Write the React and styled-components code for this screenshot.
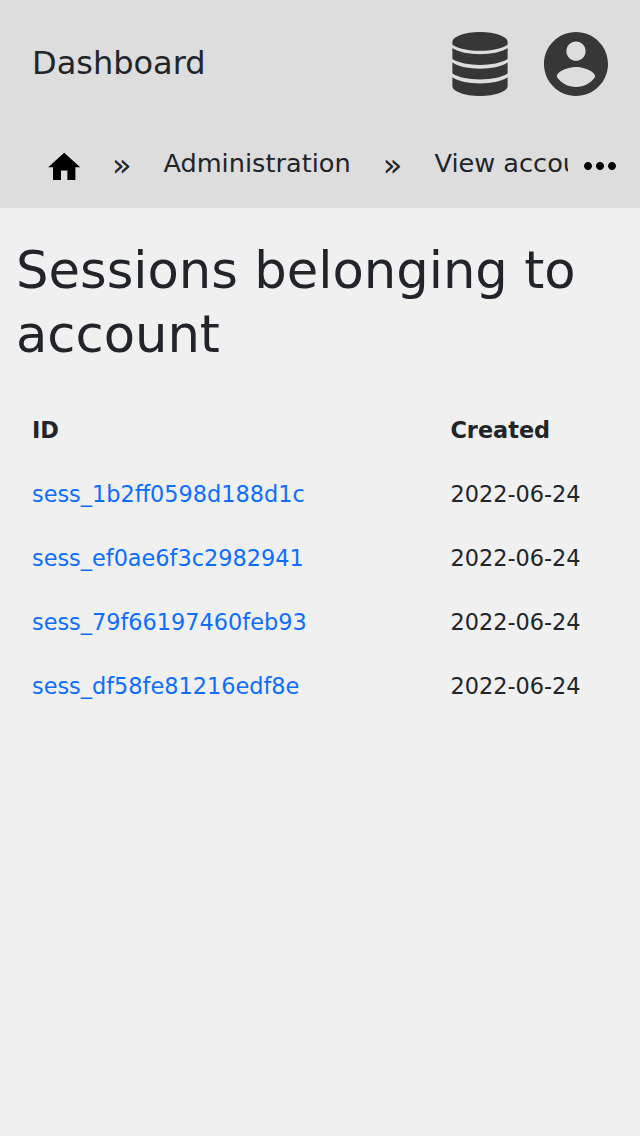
import React from "react";
import styled, { createGlobalStyle } from "styled-components";
import { MdHome, MdMoreHoriz } from "react-icons/md";

const Global = createGlobalStyle`
  * { box-sizing: border-box; }
  body { margin: 0; background: #f0f0f0; color: #212529; font-family: "DejaVu Sans", sans-serif; }
`;
const Page = styled.div`min-height: 100vh;`;
const TopBar = styled.header`
  display: flex; align-items: center; height: 128px; padding: 0 32px; background: #ddd;
`;
const Brand = styled.div`flex: 1; font-size: 32px; line-height: 48px; padding-bottom: 2px;`;
const Actions = styled.div`display: flex; gap: 32px; color: #373737;`;
const IconButton = styled.a`display: flex; width: 64px; height: 64px; svg { width: 64px; height: 64px; }`;
const Crumbs = styled.nav`display: flex; height: 80px; padding-bottom: 8px; background: #ddd;`;
const CrumbList = styled.div`
  display: flex; align-items: center; width: 568px; padding-left: 44.8px; overflow: hidden; white-space: nowrap;
`;
const Home = styled.a`display: flex; flex: none; padding-top: 6px; color: #000;`;
const Separator = styled.span`
  flex: none; width: ${(p) => p.$width}; padding: 2px 0 0; text-align: center; font-size: 32px; line-height: 40px;
`;
const Crumb = styled.span`flex: none; font-size: 25.6px; line-height: 40px; padding-bottom: 2px;`;
const FirstCrumb = styled(Crumb)`margin-left: 3px;`;
const More = styled.button`
  display: flex; align-items: center; justify-content: center; width: 64px; padding: 4px 0 0;
  border: 0; background: none; color: #000;
`;
const Main = styled.main`padding: 30px 16px;`;
const Title = styled.h1`margin: 0; font-size: 51.2px; line-height: 64px; font-weight: 400;`;
const Table = styled.table`
  width: 100%; margin-top: 32px; border-collapse: collapse; table-layout: fixed; font-size: 22.4px; line-height: 32px; text-align: left;
`;
const Cell = styled.td`padding: 16px; height: 64px;`;
const HeadCell = styled.th`padding: 16px; height: 64px; width: ${(p) => p.$width || "auto"};`;
const Link = styled.a`color: #0d6efd;`;

const sessions = ["sess_1b2ff0598d188d1c", "sess_ef0ae6f3c2982941", "sess_79f66197460feb93", "sess_df58fe81216edf8e"];

const Database = () => (
  <svg viewBox="0 0 64 64" fill="currentColor">
    <path d="M4.400 10C4.400 4.500 16.700 0 32 0s27.600 4.500 27.600 10v2.700C53.500 17 43 18.700 32 18.700S10.500 17 4.400 12.700Z" />
    <path d="M4.400 16C10.500 20.200 21 22.200 32 22.200S53.500 20.200 59.600 16v11C53.500 31 43 32.900 32 32.900S10.500 31 4.400 27Z" />
    <path d="M4.400 30.600C10.500 34.800 21 36.800 32 36.800S53.500 34.800 59.600 30.600v11C53.500 45.600 43 47.500 32 47.500S10.500 45.600 4.400 41.600Z" />
    <path d="M4.400 45.200C10.500 49.400 21 51.400 32 51.400S53.500 49.400 59.600 45.200V54C59.600 59.500 47.300 64 32 64S4.400 59.500 4.400 54Z" />
  </svg>
);

const Account = () => (
  <svg viewBox="2 2 20 20" fill="currentColor">
    <path d="M12 2C6.480 2 2 6.480 2 12s4.480 10 10 10 10-4.480 10-10S17.520 2 12 2zm0 3c1.660 0 3 1.340 3 3s-1.340 3-3 3-3-1.340-3-3 1.340-3 3-3zm0 14.200c-2.500 0-4.710-1.280-6-3.220.03-1.990 4-3.080 6-3.080 1.990 0 5.970 1.090 6 3.080-1.290 1.940-3.500 3.220-6 3.220z" />
  </svg>
);

export default function App() {
  return (
    <Page>
      <Global />
      <TopBar>
        <Brand>Dashboard</Brand>
        <Actions>
          <IconButton><Database /></IconButton>
          <IconButton><Account /></IconButton>
        </Actions>
      </TopBar>
      <Crumbs>
        <CrumbList>
          <Home><MdHome size={38.4} /></Home>
          <Separator $width="77.2px">»</Separator>
          <FirstCrumb>Administration</FirstCrumb>
          <Separator $width="83.8px">»</Separator>
          <Crumb>View account</Crumb>
        </CrumbList>
        <More><MdMoreHoriz size={48} /></More>
      </Crumbs>
      <Main>
        <Title>Sessions belonging to account</Title>
        <Table>
          <thead><tr><HeadCell>ID</HeadCell><HeadCell $width="189.6px">Created</HeadCell></tr></thead>
          <tbody>
            {sessions.map((id) => (
              <tr key={id}><Cell><Link>{id}</Link></Cell><Cell>2022-06-24</Cell></tr>
            ))}
          </tbody>
        </Table>
      </Main>
    </Page>
  );
}
